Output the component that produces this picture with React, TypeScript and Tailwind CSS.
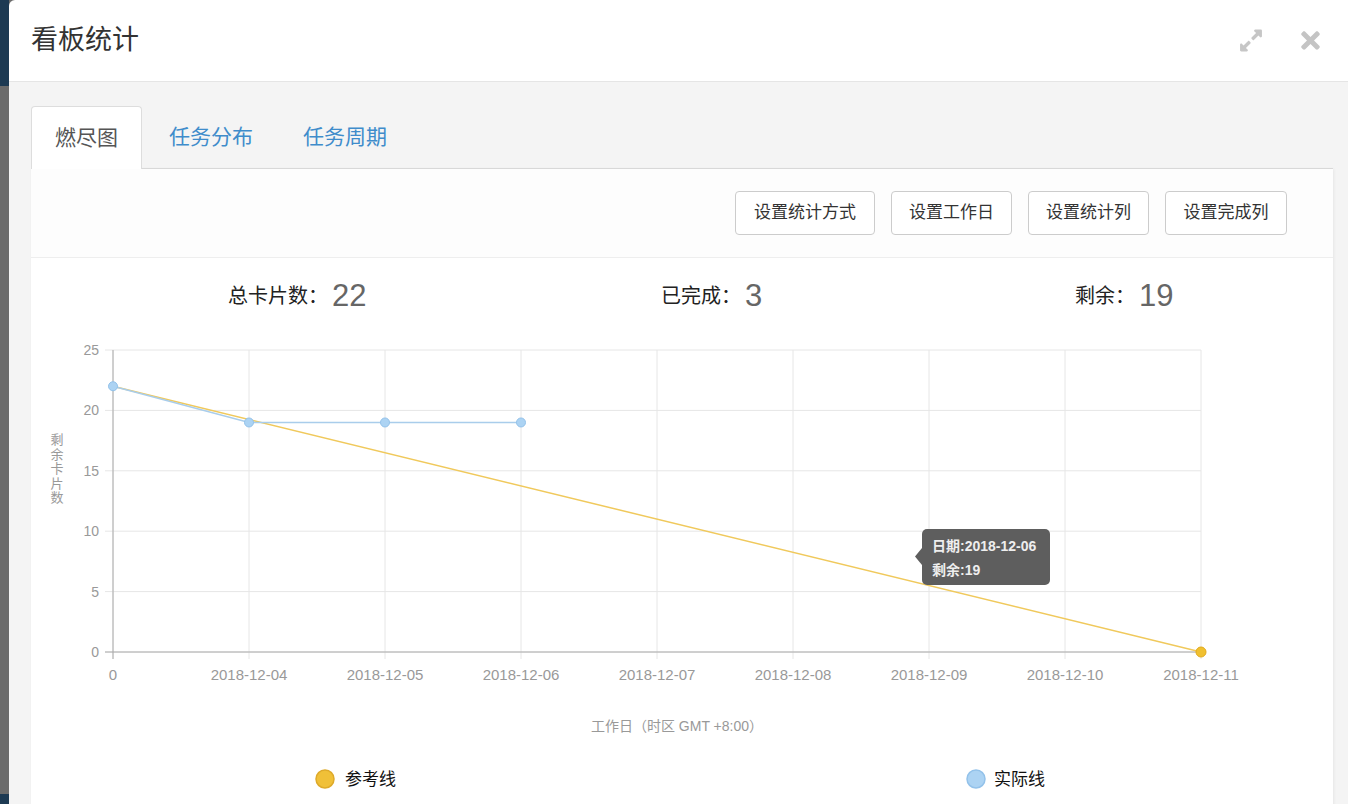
import { FaExpandAlt, FaTimes } from "react-icons/fa";

// chart geometry (svg coords, origin at panel left / top of chart block)
const LEFT = 82;
const RIGHT = 1170;
const TOP = 20;
const BOTTOM = 322;
const STEP_X = 136;
const UNIT_Y = (BOTTOM - TOP) / 25;

const xLabels = [
  "0",
  "2018-12-04",
  "2018-12-05",
  "2018-12-06",
  "2018-12-07",
  "2018-12-08",
  "2018-12-09",
  "2018-12-10",
  "2018-12-11",
];
const yTicks = [0, 5, 10, 15, 20, 25];
const actual = [22, 19, 19, 19];

const px = (i: number) => LEFT + STEP_X * i;
const py = (v: number) => BOTTOM - UNIT_Y * v;

const BurnChart = () => {
  const actualPts = actual.map((v, i) => `${px(i)},${py(v)}`).join(" ");

  return (
    <svg width={1302} height={480} className="block">
      {/* grid */}
      {yTicks.map((v) => (
        <g key={v}>
          <line x1={LEFT - 8} x2={RIGHT} y1={py(v)} y2={py(v)} stroke="#e6e6e6" />
          <text
            x={68}
            y={py(v) + 5}
            textAnchor="end"
            fontSize={14}
            fill="#999"
          >
            {v}
          </text>
        </g>
      ))}
      {xLabels.map((label, i) => (
        <g key={label}>
          <line x1={px(i)} x2={px(i)} y1={TOP} y2={BOTTOM + 7} stroke="#e6e6e6" />
          <text x={px(i)} y={350} textAnchor="middle" fontSize={15} fill="#999">
            {label}
          </text>
        </g>
      ))}

      {/* axes */}
      <line x1={LEFT} x2={LEFT} y1={TOP} y2={BOTTOM + 7} stroke="#aaa" />
      <line x1={LEFT - 8} x2={RIGHT} y1={BOTTOM} y2={BOTTOM} stroke="#aaa" />

      {/* y axis title */}
      {"剩余卡片数".split("").map((ch, i) => (
        <text key={i} x={26} y={114 + i * 14.6} textAnchor="middle" fontSize={13} fill="#999">
          {ch}
        </text>
      ))}
      {/* x axis title */}
      <text x={646} y={401} textAnchor="middle" fontSize={14} fill="#999">
        工作日（时区 GMT +8:00）
      </text>

      {/* reference line */}
      <line x1={px(0)} y1={py(22)} x2={px(8)} y2={py(0)} stroke="#f0c95c" strokeWidth={1.5} />
      <circle cx={px(8)} cy={py(0)} r={5} fill="#f0c030" stroke="#e2aa1c" />

      {/* actual line */}
      <polyline points={actualPts} fill="none" stroke="#a9cdeb" strokeWidth={1.5} />
      {actual.map((v, i) => (
        <circle key={i} cx={px(i)} cy={py(v)} r={4.5} fill="#acd3f3" stroke="#93c2ea" />
      ))}

      {/* tooltip */}
      <rect x={891} y={199} width={128} height={56} rx={5} fill="#5e5e5e" />
      <path d="M891 218 L884 226.5 L891 235 Z" fill="#5e5e5e" />
      <text x={901} y={221} fontSize={14} fontWeight="bold" fill="#eee">
        日期:2018-12-06
      </text>
      <text x={901} y={245} fontSize={14} fontWeight="bold" fill="#eee">
        剩余:19
      </text>

      {/* legend */}
      <circle cx={294} cy={449} r={9} fill="#f0c038" stroke="#deaa2a" strokeWidth={1.5} />
      <text x={314} y={455} fontSize={17} fill="#111">
        参考线
      </text>
      <circle cx={945} cy={449} r={9} fill="#acd3f3" stroke="#93c2ea" strokeWidth={1.5} />
      <text x={963} y={455} fontSize={17} fill="#111">
        实际线
      </text>
    </svg>
  );
};

const buttons = [
  { label: "设置统计方式", w: "w-[140px]" },
  { label: "设置工作日", w: "w-[121px]" },
  { label: "设置统计列", w: "w-[121px]" },
  { label: "设置完成列", w: "w-[122px]" },
];

const App = () => {
  return (
    <div className="flex h-[804px] w-full overflow-hidden bg-[#6b6b6b] font-['Liberation_Sans','Noto_Sans_CJK_SC',sans-serif]">
      {/* backdrop strip */}
      <div className="flex w-[9px] shrink-0 flex-col">
        <div className="h-[86px] bg-[#1d3a53]" />
        <div className="flex-1 bg-[#6b6b6b]" />
        <div className="h-[10px] bg-[#1d3a53]" />
      </div>

      {/* modal */}
      <div className="flex flex-1 flex-col overflow-hidden rounded-tl-[6px] bg-white">
        <div className="flex h-[82px] shrink-0 items-center justify-between border-b border-[#e5e5e5] pl-[22px] pr-[28px]">
          <h1 className="text-[27px] leading-none text-[#333]">看板统计</h1>
          <div className="flex items-center gap-[38px]">
            <FaExpandAlt className="h-[25px] w-[24px] text-[#c6c6c6]" />
            <FaTimes className="h-[27px] w-[19px] text-[#c4c4c4]" />
          </div>
        </div>

        <div className="flex-1 bg-[#f4f4f4] pl-[22px] pr-[15px] pt-[24px]">
          {/* tabs */}
          <div className="flex h-[63px] gap-[4px] border-b border-[#dddddd]">
            <div className="-mb-px flex items-center rounded-t-[4px] border border-b-0 border-[#dddddd] bg-white px-[23px] text-[21px] text-[#555]">
              燃尽图
            </div>
            <div className="flex items-center px-[23px] text-[21px] text-[#3f8ccb]">任务分布</div>
            <div className="flex items-center px-[23px] text-[21px] text-[#3f8ccb]">任务周期</div>
          </div>

          {/* panel */}
          <div className="bg-white shadow-[1px_0_3px_rgba(0,0,0,0.06)]">
            <div className="flex h-[89px] items-center justify-end gap-[16px] border-b border-[#eeeeee] bg-[#fdfdfd] pr-[46px]">
              {buttons.map((b) => (
                <button
                  key={b.label}
                  className={`${b.w} h-[44px] rounded-[4px] border border-[#cccccc] bg-white text-[17px] text-[#333]`}
                >
                  {b.label}
                </button>
              ))}
            </div>

            <div className="flex h-[72px] items-center pl-[197px] pt-[4px] text-[20px] text-[#222]">
              <div className="flex w-[433px] items-center">
                <span>总卡片数：</span>
                <span className="ml-[4px] text-[31px] text-[#666]">22</span>
              </div>
              <div className="flex w-[414px] items-center">
                <span>已完成：</span>
                <span className="ml-[4px] text-[31px] text-[#666]">3</span>
              </div>
              <div className="flex items-center">
                <span>剩余：</span>
                <span className="ml-[4px] text-[31px] text-[#666]">19</span>
              </div>
            </div>

            <BurnChart />
          </div>
        </div>
      </div>
    </div>
  );
};

export default App;
